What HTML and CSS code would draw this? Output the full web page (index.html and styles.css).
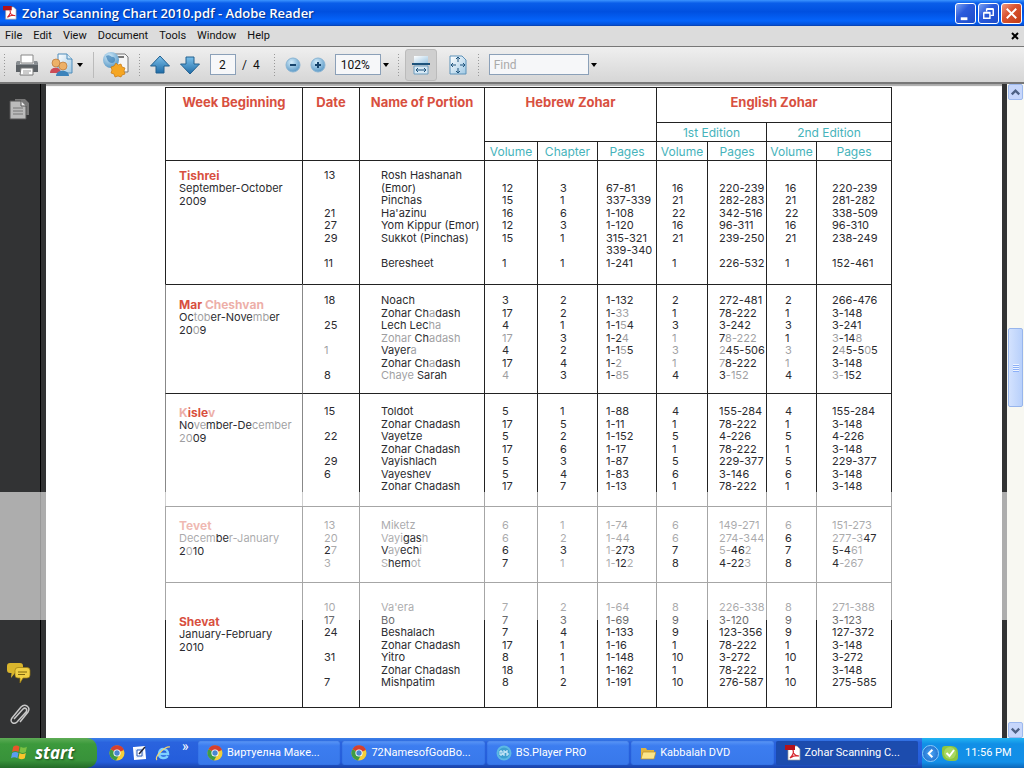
FILE: index.html
```html
<!DOCTYPE html>
<html lang="en">
<head>
<meta charset="utf-8">
<title>Zohar Scanning Chart 2010.pdf - Adobe Reader</title>
<link rel="stylesheet" href="styles.css">
</head>
<body>
<svg class="defs" aria-hidden="true">
  <defs>
    <linearGradient id="blue" x1="0" y1="0" x2="0" y2="1"><stop offset="0" stop-color="#7cc0ea"/><stop offset="1" stop-color="#1f6ca8"/></linearGradient>
    <linearGradient id="sheet" x1="0" y1="0" x2="1" y2="1"><stop offset="0" stop-color="#fff"/><stop offset="1" stop-color="#9fc8e4"/></linearGradient>
    <radialGradient id="ball" cx=".4" cy=".3" r=".8"><stop offset="0" stop-color="#d3ecfa"/><stop offset="1" stop-color="#4c8fc0"/></radialGradient>
    <symbol id="pdf" viewBox="0 0 16 16"><path d="M3 1h9l3 3v11H3z" fill="#fff" stroke="#999" stroke-width=".7"/><path d="M0 0h10v5H0z" fill="#b3131b"/><path d="M5 13c3-3 4-6 3-8 0 4 3 6 6 6-3-1-6 0-9 2z" fill="none" stroke="#d5242b" stroke-width="1.2"/></symbol>
    <symbol id="chrome" viewBox="0 0 16 16"><circle cx="8" cy="8" r="7.500" fill="#f3cf3a"/><path d="M8 8 1.500 4.200A7.500 7.500 0 0 1 15 5z" fill="#d5402f"/><path d="M8 8 1.500 4.200A7.500 7.500 0 0 0 7 15.400L10 10z" fill="#3e9b46"/><circle cx="8" cy="8" r="3.600" fill="#fff"/><circle cx="8" cy="8" r="2.700" fill="#4a86cf"/></symbol>
  </defs>
</svg>

<header class="titlebar">
  <svg class="title-icon" viewBox="0 0 16 16"><use href="#pdf"/></svg>
  <h1 class="title">Zohar Scanning Chart 2010.pdf - Adobe Reader</h1>
  <div class="window-buttons">
    <button class="win-btn" aria-label="Minimize"><svg viewBox="0 0 20 20"><path d="M5 14h7v3H5z" fill="#fff"/></svg></button>
    <button class="win-btn" aria-label="Restore"><svg viewBox="0 0 20 20" fill="none" stroke="#fff"><path d="M8 8V5.500h7V12h-3M8 5h7" stroke-width="1.500"/><path d="M5 9.500h6.500V15H5zM5 9h7" stroke-width="1.500"/></svg></button>
    <button class="win-btn win-close" aria-label="Close"><svg viewBox="0 0 20 20"><path d="m5 5 10 10M15 5 5 15" stroke="#fff" stroke-width="2"/></svg></button>
  </div>
</header>

<nav class="menubar">
  <button class="menu">File</button><button class="menu">Edit</button><button class="menu">View</button><button class="menu">Document</button><button class="menu">Tools</button><button class="menu">Window</button><button class="menu">Help</button>
  <button class="menu doc-close" aria-label="Close document"><svg viewBox="0 0 8 8"><path d="m1 1 6 6M7 1 1 7" stroke="#000" stroke-width="2"/></svg></button>
</nav>

<div class="toolbar">
  <div class="tools tools-file">
    <button class="tool" aria-label="Print"><svg class="ico-24" viewBox="0 0 24 24"><path d="M6 2h12v8H6z" fill="#fff" stroke="#888"/><path d="M2 8h3v3h14V8h3l1 3v8H1v-8z" fill="#5d6266"/><path d="M2 8h3v3h14V8h3l1 4H1z" fill="#8a8f93"/><path d="M6 15h12v7H5z" fill="#fff" stroke="#777"/><path d="M8 18h8M8 20h6" stroke="#999"/></svg></button>
    <button class="tool" aria-label="Collaborate"><svg class="ico-24" viewBox="0 0 24 24"><path d="M9 1h9l5 5v14H9z" fill="url(#sheet)" stroke="#4f8cba"/><path d="M18 1v5h5" fill="#d5e9f5" stroke="#4f8cba"/><path d="M1 20c0-7 11-7 11 0z" fill="#cc4b57"/><circle cx="7" cy="10" r="4" fill="#edb168" stroke="#b87638" stroke-width=".7"/><path d="M7 23c0-7 13-7 13 0z" fill="#3c83bb"/><circle cx="14" cy="13" r="4" fill="#edb168" stroke="#b87638" stroke-width=".7"/></svg></button>
    <button class="caret" aria-label="Collaborate options"></button>
  </div>
  <span class="rule"></span>
  <button class="tool" aria-label="Create PDF"><svg class="ico-26" viewBox="0 0 26 26"><path d="M12 2h10l3 3v15H12z" fill="#f5f5f5" stroke="#777"/><path d="M13 5h8" stroke="#777" stroke-width="2"/><circle cx="8" cy="8" r="8" fill="url(#ball)"/><path d="M3 4c4-2 4 1 7 1s3 6-1 6-5-4-6-7z" fill="#3a7fb5" opacity=".7"/><path d="m13 11 2 2 3-1 1 3 3 1-1 3 1 3-3 1-1 2-3-1-3 1-1-3-3-1 1-3-1-3 3-1z" fill="#f5a623" stroke="#c9780f" stroke-width=".7"/></svg></button>
  <span class="grip"></span>
  <div class="tools tools-page">
    <button class="tool" aria-label="Previous page"><svg class="ico-20" viewBox="0 0 20 20"><path d="M10 1 19.500 11H14v7H6v-7H.5z" fill="url(#blue)" stroke="#23608f"/></svg></button>
    <button class="tool" aria-label="Next page"><svg class="ico-20" viewBox="0 0 20 20"><path d="M10 19 19.500 9H14V2H6v7H.5z" fill="url(#blue)" stroke="#23608f"/></svg></button>
    <label class="page-box"><input class="field field-page" type="text" value="2" aria-label="Page"><span>/&nbsp; 4</span></label>
  </div>
  <span class="grip"></span>
  <div class="tools tools-zoom">
    <button class="tool" aria-label="Zoom out"><svg class="ico-16" viewBox="0 0 16 16"><circle cx="8" cy="8" r="7" fill="url(#ball)" stroke="#8ab5d4"/><path d="M5 8h6" stroke="#17456d" stroke-width="2"/></svg></button>
    <button class="tool" aria-label="Zoom in"><svg class="ico-16" viewBox="0 0 16 16"><circle cx="8" cy="8" r="7" fill="url(#ball)" stroke="#8ab5d4"/><path d="M5 8h6M8 5v6" stroke="#17456d" stroke-width="2"/></svg></button>
    <div class="combo"><input class="field field-zoom" type="text" value="102%" aria-label="Zoom"><button class="caret" aria-label="Zoom levels"></button></div>
  </div>
  <span class="grip"></span>
  <div class="tools tools-fit">
    <button class="tool tool-on" aria-label="Fit width"><svg class="ico-20" viewBox="0 0 20 20"><path d="M3 1h14v7H3z" fill="url(#sheet)"/><path d="M1 9h18" stroke="#1d537c" stroke-width="2"/><path d="M3 11h14v8H3z" fill="#d7e9f5" stroke="#6f9dbe"/><path d="M5 15h10M7 13l-2 2 2 2M13 13l2 2-2 2" fill="none" stroke="#1d537c"/></svg></button>
    <button class="tool" aria-label="Fit page"><svg class="ico-20" viewBox="0 0 20 20"><path d="M2 1h12l4 4v14H2z" fill="url(#sheet)" stroke="#5d92b9"/><path d="M10 2v5M10 13v5M3 10h5M12 10h5M8 4l2-2 2 2M8 16l2 2 2-2M5 8l-2 2 2 2M15 8l2 2-2 2" fill="none" stroke="#1d537c"/></svg></button>
  </div>
  <span class="grip"></span>
  <div class="combo"><input class="field field-find" type="text" placeholder="Find" aria-label="Find"><button class="caret" aria-label="Find options"></button></div>
</div>

<main class="viewer">
  <div class="watermark-band"></div>
  <aside class="sidebar">
    <button class="side-btn" aria-label="Pages"><svg class="ico-22" viewBox="0 0 22 24"><path d="M7 2h10l4 4v12H7z" fill="#777"/><path d="M2 4h11l5 5v13H2z" fill="#bbb" stroke="#555"/><path d="M13 4v5h5" fill="#eee" stroke="#555"/><path d="M5 11h10M5 14h10M5 17h10" stroke="#777"/></svg></button>
    <button class="side-btn side-comments" aria-label="Comments"><svg class="ico-24" viewBox="0 0 24 20"><path d="M3 0h10q3 0 3 3v4q0 3-3 3H8l-4 5 .5-5H3Q0 10 0 7V3q0-3 3-3z" fill="#d9b52d"/><path d="M11 4.500h9q3 0 3 3V12q0 3-3 3h-4l-3 5v-5h-2q-3 0-3-3V7.500q0-3 3-3z" fill="#f0cf45" stroke="#9a7a10" stroke-width=".7"/><path d="M11 9h9M11 11.500h7" stroke="#7d650f"/></svg></button>
    <button class="side-btn" aria-label="Attachments"><svg class="ico-22" viewBox="0 0 22 24"><path d="m6 16 9-10c2-2 5 0 3 3L9 19c-3 3-8 0-5-4L13 4c4-4 10 0 7 5l-8 10" fill="none" stroke="#c8c8c8" stroke-width="1.500"/></svg></button>
  </aside>

  <article class="page">
    <table class="chart">
      <colgroup><col class="c-week"><col class="c-date"><col class="c-name"><col class="c-hvol"><col class="c-chap"><col class="c-hpag"><col class="c-vol1"><col class="c-pag1"><col class="c-vol2"><col class="c-pag2"></colgroup>
      <thead>
        <tr><th rowspan="3">Week Beginning</th><th rowspan="3">Date</th><th rowspan="3">Name of Portion</th><th colspan="3" rowspan="2">Hebrew Zohar</th><th class="h-eng" colspan="4">English Zohar</th></tr>
        <tr class="sub"><th colspan="2">1st Edition</th><th colspan="2">2nd Edition</th></tr>
        <tr class="sub"><th>Volume</th><th>Chapter</th><th>Pages</th><th>Volume</th><th>Pages</th><th>Volume</th><th>Pages</th></tr>
      </thead>
      <tbody class="tishrei">
        <tr><th class="month" rowspan="8"><strong>Tishrei</strong>September-October<br>2009</th><td>13</td><td>Rosh Hashanah</td><td></td><td></td><td></td><td></td><td></td><td></td><td></td></tr>
        <tr><td></td><td>(Emor)</td><td>12</td><td>3</td><td>67-81</td><td>16</td><td>220-239</td><td>16</td><td>220-239</td></tr>
        <tr><td></td><td>Pinchas</td><td>15</td><td>1</td><td>337-339</td><td>21</td><td>282-283</td><td>21</td><td>281-282</td></tr>
        <tr><td>21</td><td>Ha'azinu</td><td>16</td><td>6</td><td>1-108</td><td>22</td><td>342-516</td><td>22</td><td>338-509</td></tr>
        <tr><td>27</td><td>Yom Kippur (Emor)</td><td>12</td><td>3</td><td>1-120</td><td>16</td><td>96-311</td><td>16</td><td>96-310</td></tr>
        <tr><td>29</td><td>Sukkot (Pinchas)</td><td>15</td><td>1</td><td>315-321</td><td>21</td><td>239-250</td><td>21</td><td>238-249</td></tr>
        <tr><td></td><td></td><td></td><td></td><td>339-340</td><td></td><td></td><td></td><td></td></tr>
        <tr><td>11</td><td>Beresheet</td><td>1</td><td>1</td><td>1-241</td><td>1</td><td>226-532</td><td>1</td><td>152-461</td></tr>
      </tbody>
      <tbody class="cheshvan">
        <tr><th class="month" rowspan="7"><strong>Mar <i class="f">Cheshvan</i></strong>Oc<i class="f">tob</i>er-Nove<i class="f">mb</i>er<br>20<i class="f">0</i>9</th><td>18</td><td>Noach</td><td>3</td><td>2</td><td>1-132</td><td>2</td><td>272-481</td><td>2</td><td>266-476</td></tr>
        <tr><td></td><td>Zohar Ch<i class="f">a</i>dash</td><td>17</td><td>2</td><td>1-<i class="f">33</i></td><td>1</td><td>78-222</td><td>1</td><td>3-148</td></tr>
        <tr><td>25</td><td>Lech Lec<i class="f">ha</i></td><td>4</td><td>1</td><td>1-1<i class="f">5</i>4</td><td>3</td><td>3-242</td><td>3</td><td>3-241</td></tr>
        <tr><td></td><td><i class="f">Zohar</i> Ch<i class="f">adash</i></td><td><i class="f">17</i></td><td>3</td><td>1-2<i class="f">4</i></td><td><i class="f">1</i></td><td>7<i class="f">8-222</i></td><td>1</td><td><i class="f">3</i>-14<i class="f">8</i></td></tr>
        <tr><td><i class="f">1</i></td><td>Vayer<i class="f">a</i></td><td>4</td><td>2</td><td>1-1<i class="f">5</i>5</td><td><i class="f">3</i></td><td><i class="f">2</i>45-506</td><td><i class="f">3</i></td><td>2<i class="f">4</i>5-5<i class="f">0</i>5</td></tr>
        <tr><td></td><td>Zohar Ch<i class="f">a</i>dash</td><td>17</td><td>4</td><td>1-<i class="f">2</i></td><td><i class="f">1</i></td><td><i class="f">7</i>8-222</td><td><i class="f">1</i></td><td>3-148</td></tr>
        <tr><td>8</td><td><i class="f">Chaye</i> Sarah</td><td><i class="f">4</i></td><td>3</td><td>1-<i class="f">85</i></td><td>4</td><td>3<i class="f">-152</i></td><td>4</td><td><i class="f">3-</i>152</td></tr>
      </tbody>
      <tbody class="kislev">
        <tr><th class="month" rowspan="7"><strong><i class="f">K</i>isle<i class="f">v</i></strong>No<i class="f">ve</i>mber-De<i class="f">cember</i><br><i class="f">20</i>09</th><td>15</td><td>Toldot</td><td>5</td><td>1</td><td>1-88</td><td>4</td><td>155-284</td><td>4</td><td>155-284</td></tr>
        <tr><td></td><td>Zohar Chadash</td><td>17</td><td>5</td><td>1-11</td><td>1</td><td>78-222</td><td>1</td><td>3-148</td></tr>
        <tr><td>22</td><td>Vayetze</td><td>5</td><td>2</td><td>1-152</td><td>5</td><td>4-226</td><td>5</td><td>4-226</td></tr>
        <tr><td></td><td>Zohar Chadash</td><td>17</td><td>6</td><td>1-17</td><td>1</td><td>78-222</td><td>1</td><td>3-148</td></tr>
        <tr><td>29</td><td>Vayishlach</td><td>5</td><td>3</td><td>1-87</td><td>5</td><td>229-377</td><td>5</td><td>229-377</td></tr>
        <tr><td>6</td><td>Vayeshev</td><td>5</td><td>4</td><td>1-83</td><td>6</td><td>3-146</td><td>6</td><td>3-148</td></tr>
        <tr><td></td><td>Zohar Chadash</td><td>17</td><td>7</td><td>1-13</td><td>1</td><td>78-222</td><td>1</td><td>3-148</td></tr>
      </tbody>
      <tbody class="tevet">
        <tr><th class="month" rowspan="4"><strong>Tevet</strong>Decem<b class="s">be</b>r-January<br><b class="s">2</b>0<b class="s">10</b></th><td>13</td><td>Miketz</td><td>6</td><td>1</td><td>1-74</td><td>6</td><td>149-271</td><td>6</td><td>151-273</td></tr>
        <tr><td>20</td><td>Vayi<b class="s">gas</b>h</td><td>6</td><td>2</td><td>1-44</td><td>6</td><td>274-344</td><td><b class="s">6</b></td><td>277-3<b class="s">47</b></td></tr>
        <tr><td><b class="s">2</b>7</td><td><b class="s">V</b>ay<b class="s">ech</b>i</td><td><b class="s">6</b></td><td><b class="s">3</b></td><td>1-<b class="s">273</b></td><td><b class="s">7</b></td><td>5-<b class="s">46</b>2</td><td><b class="s">7</b></td><td><b class="s">5-4</b>61</td></tr>
        <tr><td>3</td><td>S<b class="s">hem</b>ot</td><td><b class="s">7</b></td><td>1</td><td>1-<b class="s">12</b>2</td><td><b class="s">8</b></td><td><b class="s">4-22</b>3</td><td><b class="s">8</b></td><td><b class="s">4</b>-267</td></tr>
      </tbody>
      <tbody class="shevat">
        <tr><th class="month" rowspan="7"><strong><b class="s">Shevat</b></strong>January-February<br>2010</th><td>10</td><td>Va'era</td><td>7</td><td>2</td><td>1-64</td><td>8</td><td>226-338</td><td>8</td><td>271-388</td></tr>
        <tr><td><b class="s half">17</b></td><td><b class="s half">Bo</b></td><td><b class="s half">7</b></td><td><b class="s half">3</b></td><td><b class="s half">1-69</b></td><td><b class="s half">9</b></td><td><b class="s half">3-120</b></td><td><b class="s half">9</b></td><td><b class="s half">3-123</b></td></tr>
        <tr><td>24</td><td>Beshalach</td><td>7</td><td>4</td><td>1-133</td><td>9</td><td>123-356</td><td>9</td><td>127-372</td></tr>
        <tr><td></td><td>Zohar Chadash</td><td>17</td><td>1</td><td>1-16</td><td>1</td><td>78-222</td><td>1</td><td>3-148</td></tr>
        <tr><td>31</td><td>Yitro</td><td>8</td><td>1</td><td>1-148</td><td>10</td><td>3-272</td><td>10</td><td>3-272</td></tr>
        <tr><td></td><td>Zohar Chadash</td><td>18</td><td>1</td><td>1-162</td><td>1</td><td>78-222</td><td>1</td><td>3-148</td></tr>
        <tr><td>7</td><td>Mishpatim</td><td>8</td><td>2</td><td>1-191</td><td>10</td><td>276-587</td><td>10</td><td>275-585</td></tr>
      </tbody>
    </table>
  </article>

  <div class="scrollbar">
    <button class="scroll-btn" aria-label="Scroll up"><svg viewBox="0 0 14 14"><path d="m3 9 4-4 4 4" fill="none" stroke="#4d6185" stroke-width="2.500"/></svg></button>
    <div class="track-above"></div>
    <div class="thumb"><span></span></div>
    <div class="track-below"></div>
    <button class="scroll-btn" aria-label="Scroll down"><svg viewBox="0 0 14 14"><path d="m3 5 4 4 4-4" fill="none" stroke="#4d6185" stroke-width="2.500"/></svg></button>
  </div>
</main>

<footer class="taskbar">
  <button class="start"><svg class="flag" viewBox="0 0 18 18"><path d="M3 3q3-2 6 0L8 8Q5 6 2 8z" fill="#e8562a"/><path d="M10 3q3 2 6 0l-1 5q-3 2-6 0z" fill="#7cc142"/><path d="M2 9q3-2 6 0l-1 5q-3-2-6 0z" fill="#5b9cf0"/><path d="M9 9q3 2 6 0l-1 5q-3 2-6 0z" fill="#fbc52c"/></svg>start</button>
  <div class="quick">
    <button class="launch" aria-label="Chrome"><svg class="ico-16" viewBox="0 0 16 16"><use href="#chrome"/></svg></button>
    <button class="launch" aria-label="Show desktop"><svg class="ico-16" viewBox="0 0 16 16"><path d="M2 3 12 2l1 11-10 1z" fill="#dceaff" stroke="#fff" stroke-width="2"/><path d="M5 5h5v6H5z" fill="#fff" stroke="#2e5db5"/><path d="m7 9 6-7" stroke="#223" stroke-width="1.500"/></svg></button>
    <button class="launch" aria-label="Internet Explorer"><svg class="ico-16" viewBox="0 0 16 16"><path d="M4 9h9c0-6-9-7-9 0 0 5 7 5 8.500 2" fill="none" stroke="#7ed0ff" stroke-width="2.500"/><path d="M2 15C-1 12 10 1 15 2" fill="none" stroke="#f3d470" stroke-width="1.200"/></svg></button>
    <span class="more">»</span>
  </div>
  <div class="tasks">
    <button class="task"><svg class="ico-16" viewBox="0 0 16 16"><use href="#chrome"/></svg>Виртуелна Маке...</button>
    <button class="task"><svg class="ico-16" viewBox="0 0 16 16"><use href="#chrome"/></svg>72NamesofGodBo...</button>
    <button class="task"><svg class="ico-16" viewBox="0 0 16 16"><circle cx="8" cy="8" r="7.500" fill="#5cb8e4"/><circle cx="8" cy="8" r="5.500" fill="#3c9ed0"/><path d="M4 6v4h2V6zM7 6h2v2H7v2h2M12 6h-2v2h2v2h-2" fill="none" stroke="#e5f6ff"/></svg>BS.Player PRO</button>
    <button class="task"><svg class="ico-16" viewBox="0 0 16 16"><path d="M1 3h5l1 2h7v9H1z" fill="#e0b440"/><path d="M3 7h13l-2 7H1z" fill="#fbe58a" stroke="#b98e25" stroke-width=".7"/></svg>Kabbalah DVD</button>
    <button class="task task-on"><svg class="ico-16" viewBox="0 0 16 16"><use href="#pdf"/></svg>Zohar Scanning C...</button>
  </div>
  <div class="tray">
    <button class="tray-arrow" aria-label="Show hidden icons"><svg viewBox="0 0 16 16"><path d="M10 4 6 8l4 4" fill="none" stroke="#fff" stroke-width="2"/></svg></button>
    <svg class="ico-16" viewBox="0 0 16 16"><path d="M3 1h6q7 0 7 7v4q0 4-4 4H8q-7 0-8-7V4q0-3 3-3z" fill="#8dc63f"/><circle cx="8" cy="8" r="6" fill="#a9d860"/><path d="m4.500 8 3 3 4.500-6" fill="none" stroke="#fff" stroke-width="2"/></svg>
    <time class="clock">11:56 PM</time>
  </div>
</footer>
</body>
</html>
```
FILE: styles.css
```css
* { box-sizing: border-box; }
body {
  margin: 0;
  min-height: 100vh;
  display: flex;
  flex-direction: column;
  font: 11px/14px Roboto, "Open Sans", sans-serif;
  color: #111;
  background: #fff;
}
button { font: inherit; color: inherit; border: 0; padding: 0; background: none; }
svg { display: block; }
.defs { position: absolute; width: 0; height: 0; }
.ico-16 { width: 16px; height: 16px; }
.ico-20 { width: 20px; height: 20px; }
.ico-22 { width: 22px; height: 24px; }
.ico-24 { width: 24px; height: 24px; }
.ico-26 { width: 26px; height: 26px; }

.titlebar {
  height: 26px;
  padding: 0 2px 0 3px;
  display: flex;
  align-items: center;
  gap: 5px;
  background: linear-gradient(#3c94ff 0, #0a5ee9 12%, #0050e0 45%, #0564fb 80%, #0453dc 94%, #0a3fa8);
}
.title-icon { width: 14px; height: 16px; }
.title { margin: 0; font: 600 13px/18px "Open Sans", sans-serif; color: #fff; text-shadow: 1px 1px 1px #0a2f86; }
.window-buttons { margin-left: auto; display: flex; gap: 2px; }
.win-btn { width: 21px; height: 21px; border: 1px solid #fff; border-radius: 3px; background: linear-gradient(135deg, #7da2f2, #2b5bdc 40%, #1d4cc9); }
.win-close { background: linear-gradient(135deg, #ee9a80, #da5432 40%, #c13b14); }

.menubar { height: 20px; padding: 0 5px; display: flex; align-items: center; gap: 11px; background: #dcdcdc; }
.menu { line-height: 18px; }
.doc-close { margin-left: auto; }
.doc-close svg { width: 8px; height: 8px; }

.toolbar {
  height: 38px;
  padding: 0 3px;
  display: flex;
  align-items: center;
  gap: 9px;
  border-top: 1px solid #777;
  border-bottom: 2px solid #777;
  background: linear-gradient(#efefef, #d6d6d6);
}
.toolbar::before, .grip { content: ""; flex: none; width: 3px; height: 23px; background: radial-gradient(circle, #999 1px, transparent 1px) 0 0 / 3px 3px; }
.tools { display: flex; align-items: center; }
.tools-file, .tools-page { gap: 10px; }
.tools-page { margin-right: 4px; }
.tools-zoom { gap: 9px; margin-right: -3px; }
.tools-file .caret { margin-left: -8px; }
.tools-fit { gap: 11px; margin: 0 0 0 -4px; }
.rule { width: 1px; height: 26px; background: #bbb; }
.tool { flex: none; }
.tool-on { width: 32px; height: 32px; display: grid; place-items: center; border: 1px solid #bbb; border-radius: 3px; background: #cfcfcf; }
.field { height: 21px; padding: 0 8px; font: inherit; font-size: 12px; color: #111; background: #f6f7f9; border: 1px solid #8ba0b8; border-radius: 0; }
.field::placeholder { color: #aaa; opacity: 1; }
.page-box { display: flex; align-items: center; gap: 6px; font-size: 12px; }
.field-page { width: 26px; }
.combo { display: flex; align-items: center; gap: 1px; }
.field-zoom { width: 46px; padding: 0 5px; }
.field-find { width: 100px; padding: 0 4px; }
.caret { width: 9px; height: 20px; display: grid; place-items: center; }
.caret::before { content: ""; border: 3px solid transparent; border-top: 4px solid #000; border-bottom: 0; }

.viewer { position: relative; flex: 1; display: flex; background: #323334; }
.watermark-band { position: absolute; z-index: 1; top: 408px; left: 0; right: 17px; height: 128px; background: rgba(255, 255, 255, .6); }
.sidebar { width: 41px; padding: 13px 0 11px; display: flex; flex-direction: column; align-items: center; border-right: 1px solid #000; }
.side-btn { width: 100%; padding-right: 2px; display: grid; place-items: center; }
.side-comments { margin: auto 0 18px; }

.page { flex: 1; margin: 0 5px; padding: 3px 110px 0 119px; background: #fff; box-shadow: inset 0 3px 1px -1px #aaa; }
.chart {
  width: 100%;
  table-layout: fixed;
  border-collapse: separate;
  border-spacing: 0;
  border: 1px solid #222;
  border-width: 0 1px 1px 0;
  font-family: Inter, "Open Sans", sans-serif;
  font-size: 11px;
  color: #2b2b2f;
}
.c-week { width: 137px; }
.c-date { width: 57px; }
.c-name { width: 125px; }
.c-hvol { width: 53px; }
.c-chap { width: 60px; }
.c-hpag { width: 59px; }
.c-vol1 { width: 51px; }
.c-pag1 { width: 59px; }
.c-vol2 { width: 50px; }
.chart th, .chart td { padding: 0; border-left: 1px solid #222; vertical-align: top; white-space: nowrap; }
.chart thead th { border-top: 1px solid #222; padding-top: 6px; color: #d8503f; font-size: 13px; line-height: 16px; font-weight: 700; }
.chart thead .h-eng { height: 35px; }
.chart thead .sub th { padding: 1px 0 0; height: 19px; color: #46b3bb; font-size: 12px; line-height: 17px; font-weight: 400; }
.chart tbody tr { line-height: 13px; }
.chart tbody tr:nth-child(even) { line-height: 12px; }
.chart td { height: 12px; }
.chart tr:nth-child(odd) td { height: 13px; }
.chart tbody tr:first-child td { border-top: 1px solid #222; padding-top: var(--above); height: auto; }
.chart tbody tr:last-child td { padding-bottom: var(--below); height: auto; }
.chart td:nth-last-child(9) { padding-left: 21px; }
.chart td:nth-last-child(8) { padding-left: 21px; }
.chart td:nth-last-child(7) { padding-left: 17px; }
.chart td:nth-last-child(6) { padding-left: 22px; }
.chart td:nth-last-child(5) { padding-left: 8px; }
.chart td:nth-last-child(4) { padding-left: 15px; }
.chart td:nth-last-child(3) { padding-left: 11px; }
.chart td:nth-last-child(2) { padding-left: 18px; }
.chart td:last-child { padding-left: 15px; }
.chart .month { padding: var(--month) 0 0 13px; border-top: 1px solid #222; text-align: left; font-weight: 400; line-height: 13px; }
.month strong { display: block; color: #d8503f; font-size: 12px; font-weight: 700; }
.tishrei { --above: 8px; --below: 15px; --month: 8px; }
.cheshvan { --above: 9px; --below: 11px; --month: 13px; }
.kislev { --above: 11px; --below: 13px; --month: 12px; }
.tevet { --above: 12px; --below: 13px; --month: 12px; }
.shevat { --above: 18px; --below: 18px; --month: 32px; }
.cheshvan .month, .kislev .month, .cheshvan td:nth-last-child(9), .kislev td:nth-last-child(9) { border-left-color: #888; }
.f { font-style: normal; opacity: .45; }
.s { font-weight: inherit; position: relative; z-index: 2; }
.half { opacity: .7; }

.scrollbar { width: 17px; display: flex; flex-direction: column; align-items: center; background: #f8f8f2; }
.scroll-btn { width: 15px; height: 16px; border: 1px solid #9db9ee; border-radius: 2px; background: #c6d6fb; }
.track-above { flex: 228; }
.track-below { flex: 315; }
.thumb { width: 15px; height: 79px; border: 1px solid #97b5ec; border-radius: 2px; background: linear-gradient(90deg, #d3e2fe, #b8d0fb); display: grid; place-items: center; }
.thumb span { width: 6px; height: 8px; background: repeating-linear-gradient(#eef4fe 0 1px, #8cb0f8 1px 2px); }

.taskbar { height: 30px; display: flex; align-items: stretch; color: #fff; background: linear-gradient(#3a80e8 0, #2a63de 15%, #245ddb 80%, #1941a5); }
.start { width: 97px; padding: 0 0 0 10px; display: flex; align-items: center; gap: 6px; border-radius: 0 10px 10px 0; background: linear-gradient(#5eac56 0, #3c9a3c 20%, #38923a 75%, #236b28); font: italic 700 17px/20px "Open Sans", sans-serif; text-shadow: 1px 1px 2px #1c4d1e; }
.flag { width: 19px; height: 20px; }
.quick { width: 101px; padding-left: 12px; display: flex; align-items: center; gap: 7px; }
.more { align-self: flex-start; margin: 1px 0 0 4px; font-size: 14px; }
.tasks { flex: 1; display: grid; grid-template-columns: repeat(5, 1fr); gap: 2px; padding: 3px 4px 3px 0; }
.task { min-width: 0; padding-left: 9px; display: flex; align-items: center; gap: 4px; border-radius: 2px; background: linear-gradient(#5a96f6, #3c7df0 20%, #3878ea); white-space: nowrap; box-shadow: inset 0 0 1px #1c49b4; }
.task-on { background: #1c4cae; }
.tray { width: 102px; display: flex; align-items: center; gap: 3px; background: linear-gradient(#21b4f2 0, #118fe6 20%, #128fe8 80%, #0c66b8); }
.tray-arrow { width: 17px; height: 17px; border-radius: 9px; background: radial-gradient(#4aa7f5, #1762c4); border: 1px solid #8cc9f9; }
.clock { margin-left: 4px; }
```
